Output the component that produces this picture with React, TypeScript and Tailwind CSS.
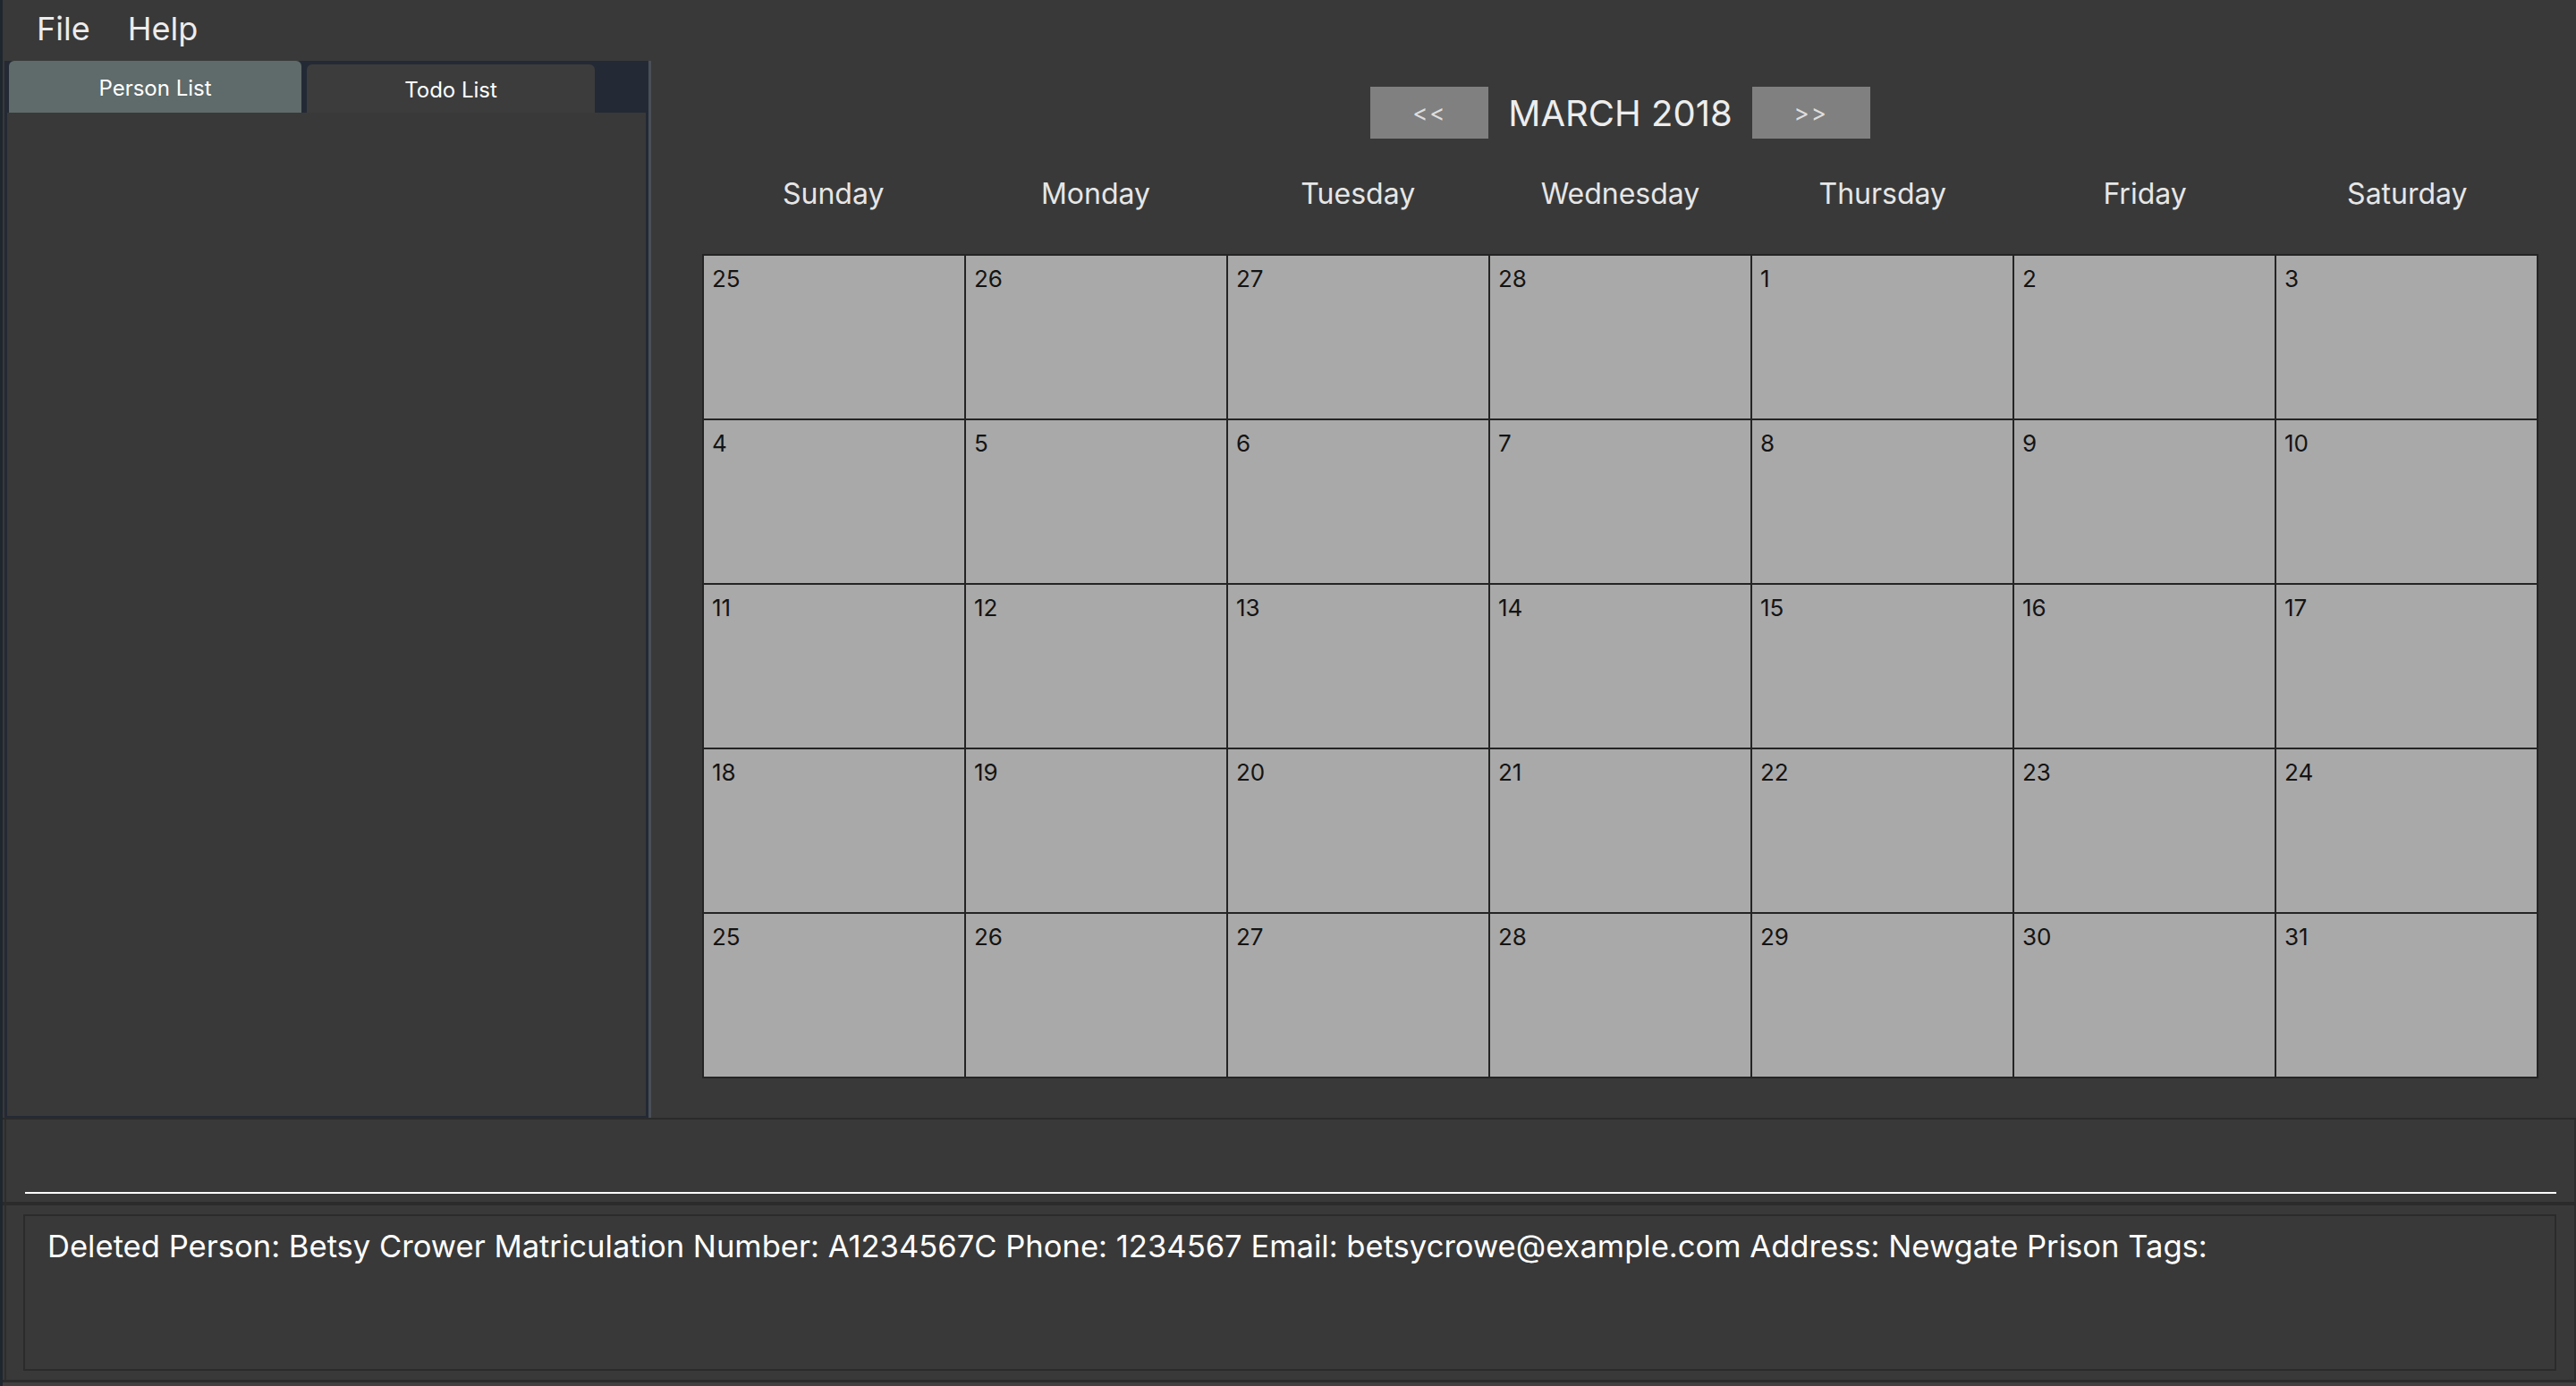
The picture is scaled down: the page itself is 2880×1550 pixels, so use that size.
import React from "react";

const days = ["Sunday", "Monday", "Tuesday", "Wednesday", "Thursday", "Friday", "Saturday"];
const dates = [
  25, 26, 27, 28, 1, 2, 3,
  4, 5, 6, 7, 8, 9, 10,
  11, 12, 13, 14, 15, 16, 17,
  18, 19, 20, 21, 22, 23, 24,
  25, 26, 27, 28, 29, 30, 31,
];

export default function App() {
  return (
    <div className="w-[2880px] h-[1550px] bg-[#1e272e] flex pl-[3px] overflow-hidden font-['Inter',_'Noto_Sans',_sans-serif]">
      <div className="flex-1 flex flex-col bg-[#393939]">
        {/* Menu bar */}
        <div className="h-[68px] flex items-center pl-[38px] pb-[5px] gap-[42px] text-[36px] text-[#ececec]">
          <span>File</span>
          <span>Help</span>
        </div>

        {/* Main split */}
        <div className="h-[1182px] flex">
          {/* Left panel */}
          <div className="w-[722px] pl-[2px] flex">
            <div className="flex-1 bg-[#232a35] flex flex-col px-[3px] pb-[2px]">
              <div className="h-[58px] flex items-end gap-[6px] pl-[2px]">
                <div className="w-[327px] h-[58px] bg-[#5f6a6a] rounded-t-[6px] flex items-center justify-center text-[24px] text-white pt-[4px]">
                  Person List
                </div>
                <div className="w-[322px] h-[54px] bg-[#3c3c3c] rounded-t-[6px] flex items-center justify-center text-[24px] text-white pt-[4px]">
                  Todo List
                </div>
              </div>
              <div className="flex-1 bg-[#393939]" />
            </div>
          </div>
          {/* Divider */}
          <div className="w-[3px] bg-[#4a4f57]" />
          {/* Right panel: calendar */}
          <div className="flex-1 pl-[57px] pr-[42px] flex flex-col">
            <div className="w-[2053px] flex justify-center items-center gap-[22px] mt-[29px]">
              <div className="w-[132px] h-[58px] bg-[#808080] flex items-center justify-center text-[26px] text-[#dedede] tracking-[2px]">
                &lt;&lt;
              </div>
              <div className="text-[40px] text-[#ededed] leading-none pt-[2px]">MARCH 2018</div>
              <div className="w-[132px] h-[58px] bg-[#808080] flex items-center justify-center text-[26px] text-[#dedede] tracking-[2px]">
                &gt;&gt;
              </div>
            </div>
            <div className="w-[2053px] h-[60px] mt-[32px] grid grid-cols-7 items-center">
              {days.map((d) => (
                <div key={d} className="text-center text-[32px] text-[#e6e6e6]">
                  {d}
                </div>
              ))}
            </div>
            <div className="w-[2053px] h-[922px] mt-[37px] bg-[#242424] p-[2px] grid grid-cols-7 grid-rows-5 gap-[2px]">
              {dates.map((n, i) => (
                <div key={i} className="bg-[#a9a9a9] pl-[9px] pt-[6px] text-[26px] text-[#141414] leading-normal">
                  {n}
                </div>
              ))}
            </div>
          </div>
        </div>

        {/* Separator line */}
        <div className="h-[2px] bg-[#2b2b2b]" />

        {/* Command box */}
        <div className="h-[92px] ml-[2px] border-l-2 border-r-2 border-[#2d2d2d] flex flex-col justify-end pl-[21px] pr-[20px] pb-[9px]">
          <div className="h-[2px] bg-white" />
        </div>

        <div className="h-[4px] bg-[#2b2b2b]" />

        {/* Result display */}
        <div className="h-[195px] ml-[2px] border-l-2 border-r-2 border-[#2d2d2d] pl-[19px] pr-[20px] pt-[10px] pb-[10px]">
          <div className="h-full border-2 border-[#2b2b2b] pl-[25px] pt-[8px] text-[34.6px] text-white leading-normal whitespace-nowrap">
            Deleted Person: Betsy Crower Matriculation Number: A1234567C Phone: 1234567 Email: betsycrowe@example.com Address: Newgate Prison Tags:
          </div>
        </div>

        <div className="h-[3px] bg-[#2b2b2b]" />
        <div className="h-[4px] bg-[#404040]" />
      </div>
    </div>
  );
}
